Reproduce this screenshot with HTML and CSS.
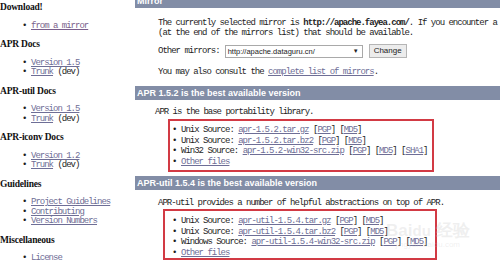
FILE: index.html
```html
<!DOCTYPE html>
<html>
<head>
<meta charset="utf-8">
<link rel="stylesheet" href="styles.css">
</head>
<body>
<div class="page">
  <nav class="side">
    <h3>Download!</h3>
    <ul><li><a class="visited" href="#">from a mirror</a></li></ul>
    <h3>APR Docs</h3>
    <ul><li><a href="#">Version 1.5</a></li><li><a href="#">Trunk</a> (dev)</li></ul>
    <h3>APR-util Docs</h3>
    <ul><li><a href="#">Version 1.5</a></li><li><a href="#">Trunk</a> (dev)</li></ul>
    <h3>APR-iconv Docs</h3>
    <ul><li><a href="#">Version 1.2</a></li><li><a href="#">Trunk</a> (dev)</li></ul>
    <h3>Guidelines</h3>
    <ul><li><a href="#">Project Guidelines</a></li><li><a href="#">Contributing</a></li><li><a href="#">Version Numbers</a></li></ul>
    <h3>Miscellaneous</h3>
    <ul><li><a href="#">License</a></li></ul>
  </nav>
  <main class="main">
    <div class="bar bar-first">Mirror</div>
    <p class="para p-mirror">The currently selected mirror is <b>http://apache.fayea.com/</b>. If you encounter a problem with this mirror, please select another<br>(at the end of the mirrors list) that should be available.</p>
    <div class="mirror-row">
      <span>Other mirrors:</span>
      <span class="select"><span class="sel-text">http://apache.dataguru.cn/</span><span class="sel-arrow">▼</span></span>
      <span class="btn">Change</span>
    </div>
    <p class="para p-consult">You may also consult the <a href="#">complete list of mirrors</a>.</p>

    <div class="bar">APR 1.5.2 is the best available version</div>
    <p class="para p-intro">APR is the base portability library.</p>
    <div class="redbox box1">
      <ul class="files">
        <li>Unix Source: <a href="#">apr-1.5.2.tar.gz</a> [<a href="#">PGP</a>] [<a href="#">MD5</a>]</li>
        <li>Unix Source: <a href="#">apr-1.5.2.tar.bz2</a> [<a href="#">PGP</a>] [<a href="#">MD5</a>]</li>
        <li>Win32 Source: <a href="#">apr-1.5.2-win32-src.zip</a> [<a href="#">PGP</a>] [<a href="#">MD5</a>] [<a href="#">SHA1</a>]</li>
        <li><a href="#">Other files</a></li>
      </ul>
    </div>

    <div class="bar">APR-util 1.5.4 is the best available version</div>
    <p class="para p-intro2">APR-util provides a number of helpful abstractions on top of APR.</p>
    <div class="redbox box2">
      <ul class="files">
        <li>Unix Source: <a href="#">apr-util-1.5.4.tar.gz</a> [<a href="#">PGP</a>] [<a href="#">MD5</a>]</li>
        <li>Unix Source: <a href="#">apr-util-1.5.4.tar.bz2</a> [<a href="#">PGP</a>] [<a href="#">MD5</a>]</li>
        <li>Windows Source: <a href="#">apr-util-1.5.4-win32-src.zip</a> [<a href="#">PGP</a>] [<a href="#">MD5</a>]</li>
        <li><a href="#">Other files</a></li>
      </ul>
    </div>
  </main>
  <div class="watermark"><span class="wm-big">Bai<span class="wm-du">du</span> 经验</span><span class="wm-small">jingyan.baidu.com</span></div>
</div>
</body>
</html>
```

FILE: styles.css
```css
html, body {
  margin: 0;
  padding: 0;
  background: #ffffff;
}
body {
  width: 500px;
  height: 261px;
  overflow: hidden;
  font-family: "Liberation Mono", "DejaVu Sans Mono", monospace;
  font-size: 9px;
  letter-spacing: -1px;
  color: #1e1e1e;
}
.page {
  display: flex;
  position: relative;
  width: 500px;
  height: 261px;
  overflow: hidden;
}
a {
  color: #6e6e96;
  text-decoration: underline;
}
a.visited {
  color: #7a5f8c;
}
/* side navigation */
.side {
  width: 135px;
  flex: none;
  padding-top: 3px;
}
.side h3 {
  margin: 0;
  font-family: "Liberation Serif", "Liberation Mono", serif;
  font-size: 9.5px;
  line-height: 9.5px;
  letter-spacing: -0.2px;
  font-weight: bold;
  color: #111;
}
.side ul {
  margin: 9px 0;
  padding: 0 0 0 22px;
  list-style: none;
}
.side li,
.files li {
  display: block;
  white-space: nowrap;
  line-height: 9.5px;
}
.side li::before,
.files li::before {
  content: "•";
  display: inline-block;
  width: 9px;
  letter-spacing: 0;
}
/* main column */
.main {
  flex: 1;
  min-width: 0;
}
.bar {
  height: 14px;
  line-height: 14px;
  background: #828da6;
  color: #ffffff;
  font-family: "Liberation Sans", Arial, sans-serif;
  font-weight: bold;
  font-size: 9px;
  letter-spacing: 0;
  padding-left: 2px;
  white-space: nowrap;
}
.bar-first {
  margin-top: -6px;
}
.para {
  margin: 0;
  padding-left: 23px;
  line-height: 10px;
  white-space: nowrap;
}
.p-mirror {
  margin-top: 10px;
}
.mirror-row {
  display: flex;
  align-items: center;
  padding-left: 23px;
  margin-top: 6px;
  height: 14px;
  white-space: nowrap;
}
.select {
  display: flex;
  align-items: center;
  justify-content: space-between;
  box-sizing: border-box;
  width: 138px;
  height: 13px;
  margin-left: 5px;
  border: 1px solid #a9a9a9;
  background: #fff;
  font-family: "Liberation Sans", Arial, sans-serif;
  font-size: 7.5px;
  letter-spacing: 0;
  padding: 0 3px 0 2px;
  color: #222;
}
.sel-arrow {
  font-size: 6px;
}
.btn {
  box-sizing: border-box;
  height: 14px;
  line-height: 12px;
  margin-left: 6px;
  padding: 0 4px;
  border: 1px solid #b5b5b5;
  background: #ececec;
  font-family: "Liberation Sans", Arial, sans-serif;
  font-size: 8px;
  letter-spacing: 0;
  color: #222;
}
.p-consult {
  margin-top: 9px;
  margin-bottom: 9px;
}
.p-intro {
  margin-top: 7px;
  padding-left: 20px;
}
.p-intro2 {
  margin-top: 8px;
  padding-left: 23px;
}
.redbox {
  box-sizing: border-box;
  border: 2px solid #d23a44;
}
.box1 {
  margin: 2px 0 4px 33px;
  width: 266px;
  height: 53px;
  padding: 4px 0 0 2px;
}
.box2 {
  margin: 1px 0 0 28px;
  width: 274px;
  height: 51px;
  padding: 5px 0 0 7px;
}
.files {
  margin: 0;
  padding: 0;
  list-style: none;
}
.files li {
  line-height: 10.5px;
}
/* Baidu watermark overlay */
.watermark {
  position: absolute;
  left: 386px;
  top: 222px;
  display: flex;
  flex-direction: column;
  align-items: center;
  color: rgba(200, 200, 200, 0.28);
  pointer-events: none;
  letter-spacing: 0;
}
.wm-big {
  font-family: "Liberation Sans", Arial, sans-serif;
  font-weight: bold;
  font-size: 17px;
  line-height: 18px;
}
.wm-du {
  font-size: 15px;
}
.wm-small {
  font-family: "Liberation Sans", Arial, sans-serif;
  font-size: 8px;
  line-height: 9px;
}
```
